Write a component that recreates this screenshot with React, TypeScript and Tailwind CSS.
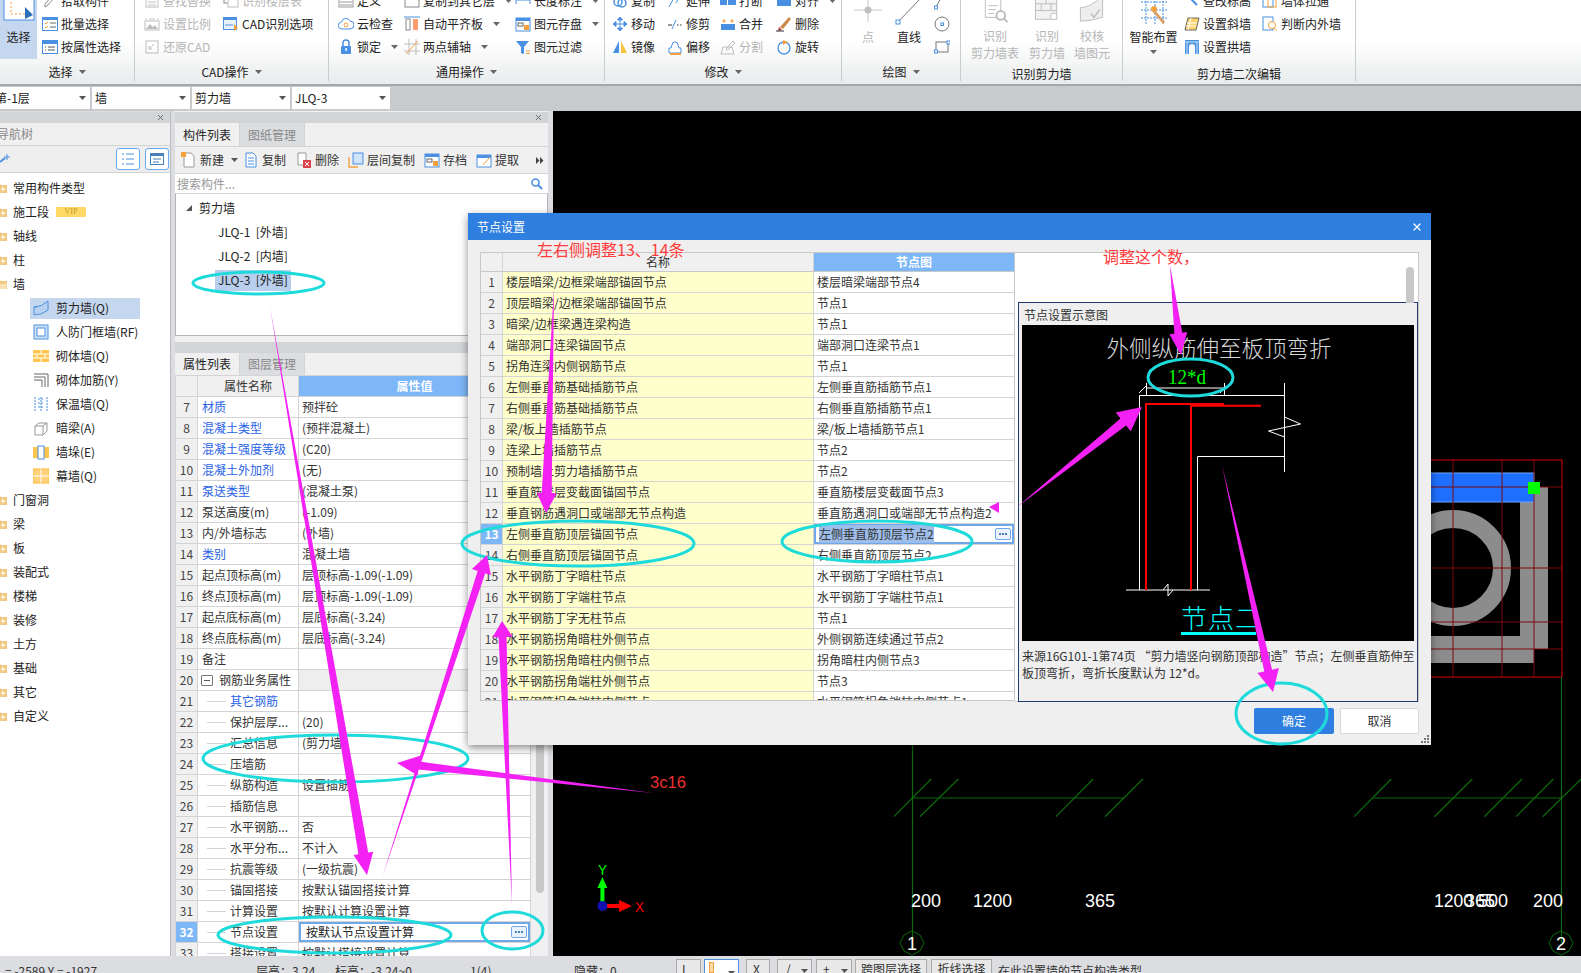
import type { ReactNode } from "react";
import { X } from "lucide-react";

const B = "#4a90e2";
const O = "#f5a03c";
const G = "#bdbdbd";

// small 16x16 ribbon glyphs
const icons: Record<string, ReactNode> = {
  pick: <path d="M3 14l2-1 8-9-2-2-8 9z" fill="none" stroke="#888" />,
  batch: <><rect x="0.5" y="1.5" width="15" height="13" fill="#fff" stroke={B} /><rect x="0" y="1" width="16" height="3" fill={B} /><path d="M3 7l1 1 2-2M3 11l1 1 2-2" stroke={O} fill="none" /><path d="M8 7h6M8 11h6" stroke="#666" /></>,
  attr: <><rect x="0.5" y="1.5" width="15" height="13" fill="#fff" stroke={B} /><rect x="0" y="1" width="16" height="4" fill={B} /><path d="M3 8h1M3 11h1M6 8h7M6 11h7" stroke="#555" /></>,
  find: <><rect x="2" y="2" width="12" height="12" fill="none" stroke={G} /><path d="M4 6h8M4 9h8M4 12h8" stroke={G} /></>,
  scale: <><rect x="1" y="5" width="14" height="9" fill="none" stroke={G} /><path d="M2 13l4-5 3 3 2-2 3 4z" fill={G} /><path d="M2 2v2M14 2v2M5 3h6" stroke={G} /></>,
  restore: <><rect x="2" y="2" width="12" height="12" fill="none" stroke={G} /><path d="M5 10l5-5M5 10h3M5 10V7" stroke={G} fill="none" /></>,
  layers: <><rect x="1" y="1" width="10" height="9" fill="#fff" stroke="#888" /><rect x="5" y="5" width="10" height="9" fill="#fff" stroke={G} /></>,
  cad: <><rect x="0.5" y="1.5" width="13" height="12" fill="#eaf2fc" stroke={B} /><rect x="0" y="1" width="14" height="3" fill={B} /><path d="M11 8l4 4-4 3z" fill={O} /><path d="M2 9h8" stroke={B} /></>,
  define: <><rect x="1" y="1" width="14" height="13" fill="#fff" stroke="#999" /><rect x="2" y="3" width="6" height="3" fill={O} /><path d="M2 9h12M2 12h12" stroke="#999" /></>,
  cloud: <><path d="M4 13a3.5 3.5 0 0 1-.5-7A4.5 4.5 0 0 1 12 5a4 4 0 0 1 0 8z" fill="#fff" stroke={B} /><circle cx="8" cy="9" r="2" fill="none" stroke={O} /></>,
  lock: <><path d="M5 7V4a3 3 0 0 1 6 0v3" fill="none" stroke={B} strokeWidth="1.5" /><rect x="3" y="7" width="10" height="8" rx="1" fill={B} /><rect x="7.4" y="9" width="1.4" height="3" fill="#fff" /></>,
  copyLayer: <><rect x="1" y="2" width="14" height="12" fill="#fff" stroke="#888" /><rect x="1" y="2" width="14" height="3" fill={B} /></>,
  align: <><path d="M0 1h16" stroke={B} /><rect x="2" y="3" width="4" height="11" fill="#fff" stroke="#888" /><rect x="9" y="3" width="5" height="11" fill="#ff9d70" /></>,
  axis: <><path d="M0 5h16M0 12h16M5 0v16M12 0v16" stroke={G} /><path d="M2 15L14 2" stroke={O} /></>,
  dim: <path d="M1 3v8M15 3v8M1 7h14" stroke={B} fill="none" />,
  save: <><rect x="1" y="2" width="14" height="13" fill="#fff" stroke={B} /><rect x="1" y="2" width="14" height="3" fill={B} /><rect x="3" y="7" width="5" height="3" fill="none" stroke="#666" /><rect x="9" y="9" width="5" height="5" fill={O} /></>,
  filter: <><path d="M1 2h13L9 8v7l-3-1V8z" fill={B} /><path d="M11 12h4M11 14.5h4" stroke={O} /></>,
  copy: <><circle cx="6" cy="9" r="4" fill="none" stroke={B} strokeWidth="1.5" /><circle cx="10" cy="10" r="4" fill="none" stroke={B} strokeWidth="1.5" /></>,
  move: <path d="M8 1l2.5 3h-5zM8 15l2.5-3h-5zM1 8l3 2.5v-5zM15 8l-3 2.5v-5zM4 8h8M8 4v8" fill={B} stroke={B} />,
  mirror: <><path d="M7 2v12H1z" fill={B} /><path d="M9 2v12h6z" fill="#f5c33c" /></>,
  extend: <path d="M2 14L8 3M11 6l-2 4" stroke={B} fill="none" />,
  trim: <><path d="M1 9h4M10 9h1.5M13 9h1.5" stroke="#333" fill="none" /><path d="M5 13L9 4" stroke={B} fill="none" /></>,
  offset: <><path d="M2 14V9h2l1-3a3 3 0 0 1 6 0l1 3h2v5z" fill="#fff" stroke={B} /><path d="M3 15h11" stroke={O} strokeWidth="2" /></>,
  split: <><rect x="0" y="4" width="7" height="8" fill={B} /><rect x="8" y="4" width="8" height="8" fill={B} /></>,
  merge: <><rect x="1" y="8" width="14" height="6" fill={B} /><path d="M4 3v4M2 5h4M12 3v4M10 5h4" stroke={O} /></>,
  cut: <><path d="M6 10L13 2l2 2-7 7z" fill="none" stroke={G} /><path d="M1 15l2-7h9l2 7z" fill="none" stroke={G} /></>,
  alignTop: <rect x="1" y="3" width="14" height="10" fill={B} />,
  erase: <><path d="M4 11L13 1l2 2-8 10z" fill="#c98a4a" /><path d="M3 11l3 3-4 1z" fill="#a33" /><path d="M0 15h8" stroke="#333" /></>,
  rotate: <><circle cx="8" cy="9" r="6" fill="none" stroke={B} strokeWidth="1.3" /><path d="M7 1l5 2-5 3z" fill={O} /></>,
  elev: <><rect x="2" y="1" width="5" height="5" fill={O} /><path d="M7 6l6 6" stroke={B} strokeWidth="2" /></>,
  pull: <><rect x="1" y="2" width="10" height="12" fill="#fff" stroke={B} /><rect x="6" y="6" width="8" height="8" fill="none" stroke={O} /></>,
  slant: <><path d="M4 2h11l-3 12H1z" fill="#ffd36b" stroke="#666" /><path d="M3 7h10M2 10h10M7 2l-3 12" stroke="#fff" /></>,
  inout: <><rect x="1" y="1" width="10" height="13" fill="#fff" stroke={B} /><circle cx="10" cy="9" r="3.5" fill="#fff" stroke={O} /><path d="M12 12l3 3" stroke={O} /></>,
  arch: <><path d="M1 1h14v14h-4V8a3 3 0 0 0-6 0v7H1z" fill={B} /><path d="M1 3h14M3 3v12M13 3v12" stroke="#cfe3fa" /></>,
  newDoc: <><path d="M3 1h7l3 3v11H3z" fill="#fff" stroke="#999" /><rect x="0" y="0" width="5" height="5" fill={O} /></>,
  docCopy: <><path d="M3 1h7l3 3v11H3z" fill="#fff" stroke={B} /><path d="M5 6h6M5 9h6M5 12h6" stroke={B} /></>,
  del: <><path d="M2 1h8v12H2z" fill="#fff" stroke="#999" /><rect x="7" y="8" width="8" height="8" fill="#d8434c" /><path d="M9 10l4 4M13 10l-4 4" stroke="#fff" /></>,
  floorCopy: <><path d="M1 5v10h9" fill="none" stroke={O} strokeWidth="1.3" /><rect x="5" y="1" width="10" height="11" fill="#cfe3fa" stroke={B} /></>,
  extract: <><rect x="1" y="3" width="14" height="12" fill="#fff" stroke={B} /><rect x="1" y="3" width="14" height="3" fill={B} /><path d="M7 13l7-8" stroke={O} /></>,
};

function Ico({ name }: { name: string }) {
  return (
    <svg width="16" height="16" viewBox="0 0 16 16" className="shrink-0">
      {icons[name]}
    </svg>
  );
}

function Caret({ className = "ml-[7px] text-[#666]" }: { className?: string }) {
  return (
    <svg width="7" height="4" viewBox="0 0 7 4" className={className}>
      <path d="M0 0h7L3.5 4z" fill="currentColor" />
    </svg>
  );
}

type Item = { t: string; i: string; caret?: boolean; off?: boolean };

function Col({ w, items }: { w: string; items: Item[] }) {
  return (
    <div className={`${w} -mt-[11px] flex shrink-0 flex-col`}>
      {items.map((it) => (
        <div key={it.t} className="flex h-[23px] items-center gap-[3px] whitespace-nowrap">
          <Ico name={it.i} />
          <span className={it.off ? "text-[#b5b5b5]" : "text-[#222]"}>{it.t}</span>
          {it.caret && <Caret />}
        </div>
      ))}
    </div>
  );
}

function Group({ w, label, noCaret, children }: { w: string; label: string; noCaret?: boolean; children: ReactNode }) {
  return (
    <div className={`${w} relative flex h-[81px] shrink-0 flex-col border-r border-[#c9ccd0]`}>
      <div className="flex h-[61px] shrink-0">{children}</div>
      <div className={`flex shrink-0 items-center justify-center text-[#222] ${noCaret ? "h-[25px]" : "h-[22px]"}`}>
        {label}
        {!noCaret && <Caret className="ml-[6px] text-[#666]" />}
      </div>
    </div>
  );
}

function BigGray({ w, l1, l2, children }: { w: string; l1: string; l2: string; children: ReactNode }) {
  return (
    <div className={`${w} -mt-[2px] flex shrink-0 flex-col items-center text-center leading-[17px] text-[#b5b5b5]`}>
      <svg width="32" height="30" viewBox="0 0 32 30">{children}</svg>
      <span className="whitespace-nowrap">{l1}</span>
      <span className="whitespace-nowrap">{l2}</span>
    </div>
  );
}

function Ribbon() {
  return (
    <div className="flex h-[84px] shrink-0 overflow-hidden border-b-2 border-[#a5a7aa] bg-gradient-to-b from-white via-white to-[#e9ebec] box-content">
      <Group w="w-[135px]" label="选择">
        <div className="-mt-[4px] flex h-[63px] w-[37px] shrink-0 flex-col items-center bg-[#c5d7ef]">
          <svg width="32" height="26" viewBox="0 0 32 26">
            <rect x="1" y="-4" width="30" height="28" fill="#fff" stroke={B} />
            <path d="M8 2v16h18" fill="none" stroke={O} strokeDasharray="2 2" />
            <path d="M22 11l8 8-8 4z" fill="#2a6fb8" />
          </svg>
          <span className="mt-[6px] text-[#222]">选择</span>
        </div>
        <div className="w-[5px] shrink-0" />
        <Col w="w-[90px]" items={[{ t: "拾取构件", i: "pick" }, { t: "批量选择", i: "batch" }, { t: "按属性选择", i: "attr" }]} />
      </Group>
      <Group w="w-[194px]" label="CAD操作">
        <div className="w-[9px] shrink-0" />
        <Col w="w-[79px]" items={[{ t: "查找替换", i: "find", off: true }, { t: "设置比例", i: "scale", off: true }, { t: "还原CAD", i: "restore", off: true }]} />
        <Col w="w-[100px]" items={[{ t: "识别楼层表", i: "layers", off: true }, { t: "CAD识别选项", i: "cad" }]} />
      </Group>
      <Group w="w-[276px]" label="通用操作">
        <div className="w-[9px] shrink-0" />
        <Col w="w-[66px]" items={[{ t: "定义", i: "define" }, { t: "云检查", i: "cloud" }, { t: "锁定", i: "lock", caret: true }]} />
        <Col w="w-[111px]" items={[{ t: "复制到其它层", i: "copyLayer", caret: true }, { t: "自动平齐板", i: "align", caret: true }, { t: "两点辅轴", i: "axis", caret: true }]} />
        <Col w="w-[85px]" items={[{ t: "长度标注", i: "dim", caret: true }, { t: "图元存盘", i: "save", caret: true }, { t: "图元过滤", i: "filter" }]} />
      </Group>
      <Group w="w-[237px]" label="修改">
        <div className="w-[7px] shrink-0" />
        <Col w="w-[55px]" items={[{ t: "复制", i: "copy" }, { t: "移动", i: "move" }, { t: "镜像", i: "mirror" }]} />
        <Col w="w-[53px]" items={[{ t: "延伸", i: "extend" }, { t: "修剪", i: "trim" }, { t: "偏移", i: "offset" }]} />
        <Col w="w-[56px]" items={[{ t: "打断", i: "split" }, { t: "合并", i: "merge" }, { t: "分割", i: "cut", off: true }]} />
        <Col w="w-[60px]" items={[{ t: "对齐", i: "alignTop", caret: true }, { t: "删除", i: "erase" }, { t: "旋转", i: "rotate" }]} />
      </Group>
      <Group w="w-[119px]" label="绘图">
        <div className="w-[4px] shrink-0" />
        <div className="-mt-[2px] flex w-[44px] shrink-0 flex-col items-center leading-[17px] text-[#b5b5b5]">
          <svg width="32" height="30" viewBox="0 0 32 30">
            <path d="M16 0v24M2 12h28" stroke="#c8c8c8" />
            <circle cx="16" cy="12" r="3.5" fill="#c0c0c0" />
          </svg>
          点
        </div>
        <div className="-mt-[2px] flex w-[38px] shrink-0 flex-col items-center leading-[17px] text-[#222]">
          <svg width="32" height="30" viewBox="0 0 32 30">
            <path d="M5 24L28 0" stroke="#777" />
            <rect x="3" y="22" width="4" height="4" fill="#fff" stroke={B} />
          </svg>
          直线
        </div>
        <div className="ml-[6px] flex w-[16px] flex-col">
          <svg width="16" height="60" viewBox="0 0 16 60">
            <path d="M2 7Q4 3 6 0" fill="none" stroke="#777" />
            <rect x="0.5" y="6" width="3" height="3" fill="#fff" stroke={B} />
            <circle cx="8" cy="24" r="7" fill="none" stroke="#777" />
            <rect x="7" y="23" width="2.5" height="2.5" fill="#fff" stroke={B} />
            <rect x="2" y="42" width="12" height="10" fill="none" stroke="#777" />
            <rect x="0.5" y="50" width="3" height="3" fill="#fff" stroke={B} />
            <rect x="13" y="41" width="3" height="3" fill="#fff" stroke={B} />
          </svg>
        </div>
      </Group>
      <Group w="w-[162px]" label="识别剪力墙" noCaret>
        <BigGray w="w-[68px]" l1="识别" l2="剪力墙表">
          <rect x="6" y="-2" width="16" height="22" fill="#fff" stroke={G} />
          <path d="M9 8h10M9 12h8M9 16h6" stroke={G} />
          <circle cx="22" cy="18" r="4.5" fill="#fff" stroke={G} strokeWidth="2" />
          <path d="M25 21l4 4" stroke={G} strokeWidth="2" />
        </BigGray>
        <BigGray w="w-[36px]" l1="识别" l2="剪力墙">
          <rect x="4" y="-2" width="22" height="24" fill="#f2f2f2" stroke={G} />
          <path d="M4 6h22M4 13h22M15 -2v8M10 6v7M20 6v7" stroke={G} />
          <circle cx="23" cy="19" r="3.5" fill="#fff" stroke={G} />
        </BigGray>
        <BigGray w="w-[54px]" l1="校核" l2="墙图元">
          <path d="M4 10Q14 10 27 -2V20Q14 24 4 24z" fill="#eee" stroke={G} />
          <path d="M15 16l3 4 6-8" fill="none" stroke={G} strokeWidth="1.5" />
        </BigGray>
      </Group>
      <Group w="w-[233px]" label="剪力墙二次编辑" noCaret>
        <div className="-mt-[2px] flex w-[61px] shrink-0 flex-col items-center leading-[17px] text-[#222]">
          <svg width="32" height="30" viewBox="0 0 32 30">
            <path d="M3 4h26M3 12h26M3 20h26M8 0v26M17 0v26M25 0v26" stroke={B} strokeDasharray="2 1" />
            <path d="M17 12l10 12-2 2-10-12z" fill="#d9a066" />
            <circle cx="16" cy="11" r="3" fill={O} />
          </svg>
          智能布置
          <Caret className="mt-[5px] text-[#666]" />
        </div>
        <Col w="w-[78px]" items={[{ t: "查改标高", i: "elev" }, { t: "设置斜墙", i: "slant" }, { t: "设置拱墙", i: "arch" }]} />
        <Col w="w-[90px]" items={[{ t: "墙体拉通", i: "pull" }, { t: "判断内外墙", i: "inout" }]} />
      </Group>
    </div>
  );
}

function Select({ text, first }: { text: string; first?: boolean }) {
  return (
    <div className={`flex h-[22px] w-[98px] items-center justify-between bg-white pl-[3px] pr-[4px] text-[#222] ${first ? "-ml-[8px]" : ""}`}>
      {text}
      <Caret className="text-[#555]" />
    </div>
  );
}

function FolderIcon({ open }: { open?: boolean }) {
  return (
    <svg width="12" height="12" viewBox="0 0 12 12" className="-ml-[5px] shrink-0">
      <path d="M0 2h5l1 1h6v8H0z" fill="#f1c983" />
      {open ? <path d="M1 6h11l-1 5H0z" fill="#f9e3b6" /> : <path d="M8 5v4M6 7h4" stroke="#fff" />}
    </svg>
  );
}

const navTop = ["常用构件类型", "施工段", "轴线", "柱", "墙"];
const navWall: [string, string][] = [
  ["剪力墙(Q)", "shear"],
  ["人防门框墙(RF)", "frame"],
  ["砌体墙(Q)", "brick"],
  ["砌体加筋(Y)", "rebar"],
  ["保温墙(Q)", "insul"],
  ["暗梁(A)", "beam"],
  ["墙垛(E)", "stack"],
  ["幕墙(Q)", "curtain"],
];
const navBottom = ["门窗洞", "梁", "板", "装配式", "楼梯", "装修", "土方", "基础", "其它", "自定义"];

const navIcons: Record<string, ReactNode> = {
  shear: <><path d="M1 7Q9 7 15 1v9Q9 15 1 15z" fill="#b9d2ef" stroke={B} /><path d="M1 7h3" stroke={B} /></>,
  frame: <><rect x="1" y="1" width="14" height="14" fill="#cfe0f5" stroke={B} /><rect x="4" y="4" width="8" height="8" fill="#fff" stroke={B} /></>,
  brick: <><rect x="0" y="2" width="16" height="12" fill="#fdc44e" /><path d="M0 6h16M0 10h16M8 2v4M4 6v4M12 6v4M8 10v4" stroke="#fff" /></>,
  rebar: <path d="M1 2h14v13M1 5h11v10M1 8h8v7" fill="none" stroke="#666" />,
  insul: <path d="M2 1v14M14 1v14M8 1v14M5 3h6M5 7h6M5 11h6" stroke={B} strokeDasharray="2 1" />,
  beam: <><path d="M2 6l4-3h8v8l-4 4H2z" fill="#fff" stroke="#999" /><path d="M2 6h8v9M10 6l4-3" stroke="#999" fill="none" /></>,
  stack: <><rect x="0" y="3" width="16" height="11" fill="#fdc44e" /><rect x="5" y="2" width="6" height="13" fill="#fff" stroke={B} /></>,
  curtain: <><rect x="0" y="1" width="16" height="14" fill="#fdd27a" stroke="#fdb92e" /><path d="M0 8h16M8 1v14" stroke="#fff" /></>,
};

function NavTree() {
  return (
    <div className="flex-1 overflow-hidden bg-white pt-[3px] text-[#222]">
      {navTop.map((t, i) => (
        <div key={t} className="flex h-[24px] items-center gap-[6px]">
          <FolderIcon open={i === 4} />
          {t}
          {t === "施工段" && (
            <span className="ml-[1px] flex h-[10px] w-[30px] items-center justify-center bg-[#ffd966] font-['Liberation_Serif',serif] text-[8px] leading-none text-[#c79a2c]">VIP</span>
          )}
        </div>
      ))}
      {navWall.map(([t, ic], i) => (
        <div key={t} className="flex h-[24px] items-center">
          <div className={`ml-[30px] flex h-[21px] w-[110px] items-center gap-[7px] pl-[3px] ${i === 0 ? "bg-[#c5d7ef]" : ""}`}>
            <svg width="16" height="16" viewBox="0 0 16 16" className="shrink-0">{navIcons[ic]}</svg>
            <span className="whitespace-nowrap">{t}</span>
          </div>
        </div>
      ))}
      {navBottom.map((t) => (
        <div key={t} className="flex h-[24px] items-center gap-[6px]">
          <FolderIcon />
          {t}
        </div>
      ))}
    </div>
  );
}

function LeftPanel() {
  return (
    <div className="flex h-full w-[171px] shrink-0 flex-col border-r border-[#b9bbbe]">
      <div className="mt-[1px] flex h-[11px] shrink-0 items-center justify-end bg-[#d2d4d7] pr-[5px]">
        <X size={9} strokeWidth={2.5} className="text-[#666]" />
      </div>
      <div className="flex h-[22px] shrink-0 items-center bg-[#f0f0f0] pl-0 text-[#888]">
        <span className="-ml-[3px]">导航树</span>
      </div>
      <div className="flex h-[28px] shrink-0 items-center justify-between border-y border-[#d4d4d4] bg-[#eeeeef] pr-[1px]">
        <svg width="10" height="10" viewBox="0 0 10 10"><path d="M0 8l5-4" stroke={B} strokeWidth="2" /><path d="M7 0v6M4 3h6" stroke={B} /></svg>
        <div className="flex gap-[5px]">
          <span className="flex h-[22px] w-[24px] items-center justify-center rounded-[3px] border border-[#66aaf0] bg-white">
            <svg width="14" height="14" viewBox="0 0 14 14"><path d="M1 2h2M1 7h2M1 12h2M5 2h8M5 7h8M5 12h8" stroke={B} /></svg>
          </span>
          <span className="flex h-[22px] w-[24px] items-center justify-center rounded-[3px] border border-[#66aaf0] bg-white">
            <svg width="14" height="14" viewBox="0 0 14 14"><rect x="0.5" y="1.5" width="13" height="11" fill="#fff" stroke="#4a7fb8" /><rect x="0" y="1" width="14" height="3" fill="#4a7fb8" /><path d="M3 7h8M3 10h6" stroke="#4a7fb8" /></svg>
          </span>
        </div>
      </div>
      <NavTree />
    </div>
  );
}

type PropRow = { n: number; name: string; val?: string; link?: boolean; sub?: boolean; group?: boolean; active?: boolean };

const propRows: PropRow[] = [
  { n: 7, name: "材质", val: "预拌砼", link: true },
  { n: 8, name: "混凝土类型", val: "(预拌混凝土)", link: true },
  { n: 9, name: "混凝土强度等级", val: "(C20)", link: true },
  { n: 10, name: "混凝土外加剂", val: "(无)", link: true },
  { n: 11, name: "泵送类型", val: "(混凝土泵)", link: true },
  { n: 12, name: "泵送高度(m)", val: "(-1.09)" },
  { n: 13, name: "内/外墙标志", val: "(外墙)" },
  { n: 14, name: "类别", val: "混凝土墙", link: true },
  { n: 15, name: "起点顶标高(m)", val: "层顶标高-1.09(-1.09)" },
  { n: 16, name: "终点顶标高(m)", val: "层顶标高-1.09(-1.09)" },
  { n: 17, name: "起点底标高(m)", val: "层底标高(-3.24)" },
  { n: 18, name: "终点底标高(m)", val: "层底标高(-3.24)" },
  { n: 19, name: "备注" },
  { n: 20, name: "钢筋业务属性", group: true },
  { n: 21, name: "其它钢筋", sub: true, link: true },
  { n: 22, name: "保护层厚...", val: "(20)", sub: true },
  { n: 23, name: "汇总信息", val: "(剪力墙)", sub: true },
  { n: 24, name: "压墙筋", sub: true },
  { n: 25, name: "纵筋构造", val: "设置插筋", sub: true },
  { n: 26, name: "插筋信息", sub: true },
  { n: 27, name: "水平钢筋...", val: "否", sub: true },
  { n: 28, name: "水平分布...", val: "不计入", sub: true },
  { n: 29, name: "抗震等级", val: "(一级抗震)", sub: true },
  { n: 30, name: "锚固搭接", val: "按默认锚固搭接计算", sub: true },
  { n: 31, name: "计算设置", val: "按默认计算设置计算", sub: true },
  { n: 32, name: "节点设置", val: "按默认节点设置计算", sub: true, active: true },
  { n: 33, name: "搭接设置", val: "按默认搭接设置计算", sub: true },
];

function DotsButton() {
  return (
    <span className="flex h-[12px] w-[16px] items-center justify-center gap-[1px] rounded-[2px] border border-[#6ea8e8] bg-[#eaf3fd]">
      <i className="h-[2px] w-[2px] bg-[#4a7fb8]" />
      <i className="h-[2px] w-[2px] bg-[#4a7fb8]" />
      <i className="h-[2px] w-[2px] bg-[#4a7fb8]" />
    </span>
  );
}

function PropRowView({ r }: { r: PropRow }) {
  return (
    <div className="flex h-[21px] shrink-0 border-b border-[#d4d4d4] bg-white">
      <div className={`flex w-[22px] shrink-0 items-center justify-center border-r border-[#d4d4d4] ${r.active ? "bg-[#7db7f7] font-bold text-white" : "bg-[#f0f0f0] text-[#444]"}`}>{r.n}</div>
      <div className="flex w-[101px] shrink-0 items-center whitespace-nowrap border-r border-[#d4d4d4]">
        {r.group && (
          <>
            <span className="ml-[3px] flex h-[11px] w-[12px] items-center justify-center rounded-[1px] border border-[#777]"><i className="h-[1px] w-[6px] bg-[#555]" /></span>
            <span className="ml-[6px] text-[#333]">{r.name}</span>
          </>
        )}
        {r.sub && <i className="ml-[9px] mr-[4px] h-[1px] w-[19px] shrink-0 bg-[#d4d4d4]" />}
        {!r.group && <span className={`${r.sub ? "" : "ml-[4px]"} ${r.link ? "text-[#2a62e6]" : "text-[#333]"}`}>{r.name}</span>}
      </div>
      {r.active ? (
        <div className="flex flex-1 items-center justify-between border-2 border-[#6ea8e8] pl-[5px] pr-[1px] text-[#222]">
          {r.val}
          <DotsButton />
        </div>
      ) : (
        <div className={`flex flex-1 items-center pl-[3px] text-[#333] ${r.group ? "bg-[#eeeeee]" : ""}`}>{r.val}</div>
      )}
    </div>
  );
}

const listTools: [string, string, string][] = [
  ["新建", "newDoc", "ml-[6px]"],
  ["复制", "docCopy", "ml-[5px]"],
  ["删除", "del", "ml-[10px]"],
  ["层间复制", "floorCopy", "ml-[9px]"],
  ["存档", "save", "ml-[9px]"],
  ["提取", "extract", "ml-[9px]"],
];

function Tab({ text, active }: { text: string; active?: boolean }) {
  return (
    <div className={`flex h-full w-[65px] items-center justify-center border-r border-[#d4d4d4] ${active ? "bg-[#f0f0f0] text-[#222]" : "bg-[#dcdde0] text-[#888]"}`}>
      {text}
    </div>
  );
}

function MiddlePanel() {
  return (
    <div className="flex h-full w-[373px] shrink-0 flex-col bg-[#f0f0f0]">
      <div className="mt-[1px] flex h-[11px] shrink-0 items-center justify-end bg-[#d2d4d7] pr-[5px]">
        <X size={9} strokeWidth={2.5} className="text-[#666]" />
      </div>
      <div className="flex h-[23px] shrink-0">
        <Tab text="构件列表" active />
        <Tab text="图纸管理" />
      </div>
      <div className="flex h-[28px] shrink-0 items-center border-y border-[#d4d4d4] text-[#333]">
        {listTools.map(([t, ic, m]) => (
          <div key={t} className={`flex items-center gap-[3px] ${m}`}>
            <Ico name={ic} />
            {t}
            {t === "新建" && <Caret className="ml-[4px] text-[#555]" />}
          </div>
        ))}
        <svg width="8" height="7" viewBox="0 0 8 7" className="ml-auto mr-[4px]"><path d="M0 0l3.5 3.5L0 7zM4 0l3.5 3.5L4 7z" fill="#444" /></svg>
      </div>
      <div className="flex h-[19px] shrink-0 items-center justify-between bg-white pl-[2px] pr-[5px] text-[#999]">
        搜索构件...
        <svg width="13" height="13" viewBox="0 0 13 13"><circle cx="5.5" cy="5.5" r="3.5" fill="none" stroke={B} strokeWidth="1.6" /><path d="M8 8l4 4" stroke={B} strokeWidth="2" /></svg>
      </div>
      <div className="h-[143px] shrink-0 border border-t-[#d4d4d4] border-[#b5b5b5] bg-white pt-[2px] text-[#222]">
        <div className="flex h-[24px] items-center">
          <svg width="6" height="6" viewBox="0 0 6 6" className="ml-[10px] mr-[7px]"><path d="M6 0v6H0z" fill="#555" /></svg>
          剪力墙
        </div>
        {["JLQ-1  [外墙]", "JLQ-2  [内墙]", "JLQ-3  [外墙]"].map((t, i) => (
          <div key={t} className="flex h-[24px] items-center pl-[39px]">
            <span className={`flex h-[21px] w-[76px] items-center whitespace-pre pl-[3px] ${i === 2 ? "bg-[#b8cfee]" : ""}`}>{t}</span>
          </div>
        ))}
      </div>
      <div className="h-[6px] shrink-0 bg-[#f0f0f0]" />
      <div className="h-[11px] shrink-0 bg-[#d2d4d7]" />
      <div className="flex h-[23px] shrink-0 border-b border-[#d4d4d4]">
        <Tab text="属性列表" active />
        <Tab text="图层管理" />
      </div>
      <div className="flex min-h-0 flex-1">
        <div className="flex w-[356px] shrink-0 flex-col overflow-hidden border-x border-[#d4d4d4]">
          <div className="flex h-[21px] shrink-0 border-b border-[#d4d4d4]">
            <div className="w-[22px] shrink-0 border-r border-[#d4d4d4] bg-[#f0f0f0]" />
            <div className="flex w-[101px] shrink-0 items-center justify-center border-r border-[#d4d4d4] bg-[#f0f0f0] text-[#333]">属性名称</div>
            <div className="flex flex-1 items-center justify-center bg-[#7db7f7] font-bold text-white">属性值</div>
          </div>
          {propRows.map((r) => <PropRowView key={r.n} r={r} />)}
        </div>
        <div className="flex-1 bg-[#f0f0f0] pl-[5px] pt-[357px]">
          <div className="h-[160px] w-[8px] rounded-[4px] bg-[#c8c8c8]" />
        </div>
      </div>
    </div>
  );
}

// page coordinates, the canvas viewBox starts at 553,111
function Canvas() {
  const ticks: [number, number][] = [[533, 589], [572, 630], [777, 833], [851, 908], [1226, 1282], [1347, 1404], [1422, 1479], [1470, 1526], [1510, 1568]];
  const labels: [number, string, number][] = [[911, "200", 30], [973, "1200", 39], [1085, "365", 30], [1434, "1200", 39], [1465, "365", 30], [1478, "500", 30], [1533, "200", 30]];
  return (
    <div className="min-w-0 flex-1 bg-black">
      <svg viewBox="553 111 1028 845" className="block h-full w-full">
        <rect x="1430" y="487" width="118" height="162" fill="#8c8c8c" />
        <rect x="1430" y="636" width="104" height="27" fill="#8c8c8c" />
        <rect x="1534" y="649" width="14" height="14" fill="#000" />
        <rect x="1420" y="501" width="100" height="135" fill="#000" />
        <circle cx="1453" cy="568" r="49" fill="none" stroke="#8c8c8c" strokeWidth="18" />
        <rect x="1420" y="473" width="114" height="29" fill="#1e6fff" stroke="#6fa3ff" />
        <path d="M1453 460v217M1502 460v217M1534 460v217M1420 487h142M1420 568h142M1420 622h142M1420 649h142" stroke="#7a0b0b" />
        <path d="M1420 460h142v217h-142" fill="none" stroke="#e00000" />
        <rect x="1528" y="482" width="12" height="12" fill="#0f0" />

        <path d="M912.5 745v198M1561.5 677v266M912 798h211M1372 798h189" stroke="#0b6a0b" strokeWidth="1.2" fill="none" />
        {ticks.map(([a, b]) => (
          <path key={a} d={`M${540 + a / 1.506} 816.7L${540 + b / 1.506} 779`} stroke="#0b6a0b" strokeWidth="1.2" />
        ))}
        {labels.map(([x, t, w]) => (
          <text key={x} x={x} y="907" fontFamily="Liberation Sans, sans-serif" fontSize="19" fill="#fff" textLength={w} lengthAdjust="spacingAndGlyphs">{t}</text>
        ))}
        <polygon points="912,931 920,935 924,943 920,951 912,955 904,951 900,943 904,935" fill="none" stroke="#0b6a0b" />
        <polygon points="1561,931 1569,935 1573,943 1569,951 1561,955 1553,951 1549,943 1553,935" fill="none" stroke="#0b6a0b" />
        <text x="912" y="950" textAnchor="middle" fontFamily="Liberation Sans, sans-serif" fontSize="18" fill="#fff">1</text>
        <text x="1561" y="950" textAnchor="middle" fontFamily="Liberation Sans, sans-serif" fontSize="18" fill="#fff">2</text>

        <path d="M602.4 906v-20" stroke="#0f0" strokeWidth="4" />
        <path d="M602.4 877l5 11h-10z" fill="#0f0" />
        <path d="M602 906h18" stroke="#f00" strokeWidth="4" />
        <path d="M632 906l-13-6v12z" fill="#f00" />
        <circle cx="602.4" cy="906" r="5" fill="#1010b0" />
        <text x="598" y="875" fontFamily="Liberation Sans, sans-serif" fontSize="14" fill="#0f0" textLength="9" lengthAdjust="spacingAndGlyphs">Y</text>
        <text x="635" y="912" fontFamily="Liberation Sans, sans-serif" fontSize="15" fill="#f00" textLength="9" lengthAdjust="spacingAndGlyphs">X</text>
      </svg>
    </div>
  );
}

const nodeRows: [string, string][] = [
  ["楼层暗梁/边框梁端部锚固节点", "楼层暗梁端部节点4"],
  ["顶层暗梁/边框梁端部锚固节点", "节点1"],
  ["暗梁/边框梁遇连梁构造", "节点1"],
  ["端部洞口连梁锚固节点", "端部洞口连梁节点1"],
  ["拐角连梁内侧钢筋节点", "节点1"],
  ["左侧垂直筋基础插筋节点", "左侧垂直筋插筋节点1"],
  ["右侧垂直筋基础插筋节点", "右侧垂直筋插筋节点1"],
  ["梁/板上墙插筋节点", "梁/板上墙插筋节点1"],
  ["连梁上墙插筋节点", "节点2"],
  ["预制墙上剪力墙插筋节点", "节点2"],
  ["垂直筋楼层变截面锚固节点", "垂直筋楼层变截面节点3"],
  ["垂直钢筋遇洞口或端部无节点构造", "垂直筋遇洞口或端部无节点构造2"],
  ["左侧垂直筋顶层锚固节点", "左侧垂直筋顶层节点2"],
  ["右侧垂直筋顶层锚固节点", "右侧垂直筋顶层节点2"],
  ["水平钢筋丁字暗柱节点", "水平钢筋丁字暗柱节点1"],
  ["水平钢筋丁字端柱节点", "水平钢筋丁字端柱节点1"],
  ["水平钢筋丁字无柱节点", "节点1"],
  ["水平钢筋拐角暗柱外侧节点", "外侧钢筋连续通过节点2"],
  ["水平钢筋拐角暗柱内侧节点", "拐角暗柱内侧节点3"],
  ["水平钢筋拐角端柱外侧节点", "节点3"],
  ["水平钢筋拐角端柱内侧节点", "水平钢筋拐角端柱内侧节点1"],
];

function NodeDiagram() {
  return (
    <svg viewBox="1022 325 392 316" className="h-[316px] w-[392px] shrink-0 bg-black">
      <text x="1219" y="357" textAnchor="middle" fontFamily="Noto Sans CJK SC, sans-serif" fontWeight="300" fontSize="22.5" fill="#d8d8d8">外侧纵筋伸至板顶弯折</text>
      <text x="1187" y="384" textAnchor="middle" fontFamily="Liberation Serif, serif" fontSize="20" fill="#0f0" textLength="38" lengthAdjust="spacingAndGlyphs">12*d</text>
      <g stroke="#fff" strokeWidth="1" fill="none">
        <path d="M1139.5 590V395.5H1284.5M1284.5 383V472M1197.5 590V456.5H1284.5M1126 590H1210" />
        <path d="M1146.5 383v12M1224.5 383v12M1146 388h78M1139 393l7-7M1220 393l7-7" />
        <path d="M1284.5 417l16 7-32 7 16 6" />
        <path d="M1163 590l5-6v12l5-6" />
      </g>
      <path d="M1146 590V404H1224M1191 590V405.7H1261" stroke="#f00" strokeWidth="2" fill="none" />
      <text x="1181" y="628" fontWeight="300" fontSize="26" letterSpacing="1" fill="#0ff">节点二</text>
      <rect x="1181" y="632" width="75" height="3" fill="#0ff" />
    </svg>
  );
}

function NodeDialog() {
  return (
    <div className="absolute left-[468px] top-[213px] flex h-[532px] w-[963px] flex-col bg-[#efefef] shadow-[0_3px_8px_rgba(0,0,0,0.45)]">
      <div className="flex h-[27px] shrink-0 items-center justify-between bg-[#2f7fe0] pl-[9px] pr-[8px] text-white">
        节点设置
        <X size={12} strokeWidth={2.5} />
      </div>
      <div className="flex h-[450px] shrink-0 pl-[12px] pt-[12px]">
        <div className="h-[449px] w-[535px] shrink-0 overflow-hidden border-x border-b border-[#c8c8c8]">
          <div className="flex h-[20px] border-y border-[#c8c8c8]">
            <div className="w-[22px] shrink-0 border-r border-[#d4d4d4] bg-[#f0f0f0]" />
            <div className="flex w-[311px] shrink-0 items-center justify-center border-r border-[#d4d4d4] bg-[#f0f0f0] text-[#333]">名称</div>
            <div className="flex flex-1 items-center justify-center bg-[#7db7f7] font-bold text-white">节点图</div>
          </div>
          {nodeRows.map(([name, val], i) => (
            <div key={name} className="flex h-[21px] border-b border-[#d4d4d4]">
              <div className={`flex w-[22px] shrink-0 items-center justify-center border-r border-[#d4d4d4] ${i === 12 ? "bg-[#7db7f7] font-bold text-white" : "bg-[#f0f0f0] text-[#444]"}`}>{i + 1}</div>
              <div className="flex w-[311px] shrink-0 items-center whitespace-nowrap border-r border-[#d4d4d4] bg-[#ffffcc] pl-[3px] text-[#333]">{name}</div>
              {i === 12 ? (
                <div className="flex flex-1 items-center justify-between border-2 border-[#6ea8e8] bg-white pl-[3px] pr-[1px] text-[#333]">
                  <span className="bg-[#9dbdea]">{val}</span>
                  <DotsButton />
                </div>
              ) : (
                <div className="flex flex-1 items-center whitespace-nowrap bg-white pl-[3px] text-[#333]">{val}</div>
              )}
            </div>
          ))}
        </div>
        <div className="relative h-[450px] w-[404px] shrink-0 border-y border-r border-[#c8c8c8] bg-white pt-[49px]">
          <div className="absolute left-[391px] top-[14px] h-[36px] w-[8px] rounded-t-[4px] bg-[#c8c8c8]" />
          <div className="ml-[3px] flex h-[400px] flex-col border border-[#1f3a6e] bg-[#efefef] pl-[3px]">
            <div className="flex h-[22px] shrink-0 items-center pl-[2px] pt-[1px] text-[#333]">节点设置示意图</div>
            <NodeDiagram />
            <div className="mt-[6px] whitespace-nowrap leading-[17px] text-[#333]">
              来源16G101-1第74页 “剪力墙竖向钢筋顶部构造”节点；左侧垂直筋伸至
              <br />
              板顶弯折，弯折长度默认为 12*d。
            </div>
          </div>
        </div>
      </div>
      <div className="relative flex flex-1 items-start justify-end gap-[6px] pr-[12px] pt-[18px]">
        <button className="flex h-[26px] w-[80px] items-center justify-center rounded-[2px] bg-[#2f7fe0] text-white">确定</button>
        <button className="flex h-[26px] w-[79px] items-center justify-center rounded-[2px] border border-[#d8d8d8] bg-white text-[#333]">取消</button>
        <svg width="8" height="8" viewBox="0 0 8 8" className="absolute bottom-[2px] right-[2px]"><path d="M6 0h2v2H6zM3 3h2v2H3zM6 3h2v2H6zM0 6h2v2H0zM3 6h2v2H3zM6 6h2v2H6z" fill="#777" /></svg>
      </div>
    </div>
  );
}

function arrowPoints(x1: number, y1: number, x2: number, y2: number, headW: number, headL: number, neckW: number) {
  const len = Math.hypot(x2 - x1, y2 - y1);
  const ux = (x2 - x1) / len;
  const uy = (y2 - y1) / len;
  const bx = x2 - ux * headL;
  const by = y2 - uy * headL;
  const at = (w: number) => [`${bx - uy * w / 2},${by + ux * w / 2}`, `${bx + uy * w / 2},${by - ux * w / 2}`];
  const [n1, n2] = at(neckW);
  const [h1, h2] = at(headW);
  return `${x1},${y1} ${n1} ${h1} ${x2},${y2} ${h2} ${n2}`;
}

const arrows: number[][] = [
  [270, 307, 367, 875, 20, 22, 10],
  [383, 875, 487, 555, 20, 18, 8],
  [512, 905, 502, 621, 20, 16, 8],
  [653, 793, 397, 763, 20, 22, 8],
  [554, 288, 546, 513, 20, 20, 10],
  [1017, 507, 1142, 407, 24, 24, 9],
  [1170, 265, 1181, 355, 18, 22, 8],
  [1222, 465, 1273, 692, 22, 22, 8],
];

// x1 x2 y1 y2 of the hand-drawn rings
const rings: number[][] = [
  [193, 324, 272, 294],
  [203, 468, 735, 782],
  [218, 451, 917, 953],
  [482, 543, 912, 949],
  [462, 694, 521, 566],
  [782, 972, 521, 562],
  [1148, 1233, 359, 396],
  [1236, 1327, 683, 744],
];

function Annotations() {
  return (
    <svg viewBox="0 0 1581 973" className="pointer-events-none absolute left-0 top-0 h-[973px] w-[1581px]">
      {rings.map(([a, b, c, d]) => (
        <ellipse key={a} cx={(a + b) / 2} cy={(c + d) / 2} rx={(b - a) / 2} ry={(d - c) / 2} fill="none" stroke="#1edada" strokeWidth="3" />
      ))}
      {arrows.map((a) => (
        <polygon key={a[0]} points={arrowPoints(a[0], a[1], a[2], a[3], a[4], a[5], a[6])} fill="#f421f4" />
      ))}
      <polygon points="989,507 999,502 999,513" fill="#f421f4" />
      <text x="537" y="256" fontSize="16" fill="#ff3c3c">左右侧调整13、14条</text>
      <text x="1103" y="263" fontSize="16" fill="#ff3c3c">调整这个数，</text>
      <text x="650" y="788" fontFamily="Liberation Sans, sans-serif" fontSize="17" fill="#e83030" textLength="36" lengthAdjust="spacingAndGlyphs">3c16</text>
    </svg>
  );
}

function StatusBar() {
  return (
    <div className="flex h-[17px] shrink-0 overflow-hidden whitespace-nowrap bg-[#dcdde0] text-[#333]">
      <span className="ml-[5px] mt-[6px] w-[251px] shrink-0">= -2589 Y = -1927</span>
      <span className="mt-[6px] w-[79px] shrink-0">层高：3.24</span>
      <span className="mt-[6px] w-[135px] shrink-0">标高：-3.24~0</span>
      <span className="mt-[6px] w-[104px] shrink-0">1(4)</span>
      <span className="mt-[6px] w-[102px] shrink-0">隐藏：0</span>
      <div className="mt-[3px] flex h-[20px] shrink-0 text-[#333]">
        <span className="w-[25px] border border-[#aaa] bg-[#e8e8e8] pl-[5px]">L</span>
        <span className="ml-[3px] flex w-[35px] justify-between border border-[#4a90e2] bg-white pl-[4px] pr-[3px] pt-[2px]"><i className="h-[11px] w-[5px] border border-[#f5a03c] bg-[#ffd9a8]" /><Caret className="mt-[9px] text-[#555]" /></span>
        <span className="ml-[7px] w-[24px] border border-[#aaa] bg-[#e8e8e8] pl-[6px]">X</span>
        <span className="ml-[7px] flex w-[35px] justify-between border border-[#aaa] bg-[#e8e8e8] pl-[8px] pr-[3px]">/<Caret className="mt-[9px] text-[#555]" /></span>
        <span className="ml-[4px] flex w-[36px] justify-between border border-[#aaa] bg-[#e8e8e8] pl-[6px] pr-[3px]">+<Caret className="mt-[9px] text-[#555]" /></span>
        <span className="ml-[3px] flex w-[72px] justify-center border border-[#aaa] bg-[#e8e8e8]">跨图层选择</span>
        <span className="ml-[4px] flex w-[61px] justify-center border border-[#aaa] bg-[#e8e8e8]">折线选择</span>
        <span className="ml-[6px] mt-[3px]">在此设置墙的节点构造类型</span>
      </div>
    </div>
  );
}

export default function App() {
  return (
    <div className="relative flex h-[973px] w-[1581px] flex-col overflow-hidden bg-[#c8cacd] font-['Noto_Sans_CJK_SC','Liberation_Sans',sans-serif] text-[12px]">
      <Ribbon />
      <div className="flex h-[25px] shrink-0 items-start gap-[2px] bg-[#c8cacd] pt-[1px]">
        <Select text="第-1层" first />
        <Select text="墙" />
        <Select text="剪力墙" />
        <Select text="JLQ-3" />
      </div>
      <div className="flex min-h-0 flex-1 bg-[#dcdde0]">
        <LeftPanel />
        <div className="w-[4px] shrink-0" />
        <MiddlePanel />
        <div className="w-[5px] shrink-0" />
        <Canvas />
      </div>
      <StatusBar />
      <NodeDialog />
      <Annotations />
    </div>
  );
}
